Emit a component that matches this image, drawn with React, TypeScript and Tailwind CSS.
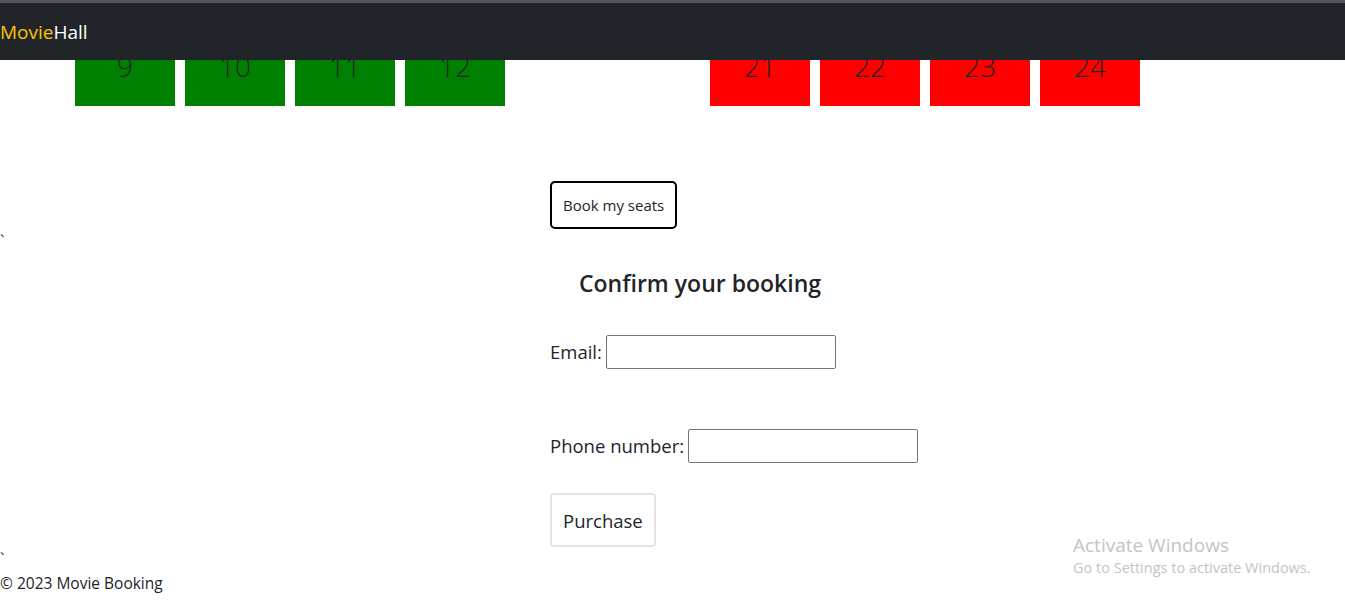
import { FC } from "react";

const leftSeats = [9, 10, 11, 12];
const rightSeats = [21, 22, 23, 24];

const Seat: FC<{ n: number; taken?: boolean }> = ({ n, taken }) => (
  <div
    className={`w-[100px] h-[60px] text-center text-[28px] font-light leading-[40px] text-[#212529] ${
      taken ? "bg-[#ff0000]" : "bg-[#008000]"
    }`}
  >
    {n}
  </div>
);

const App: FC = () => {
  return (
    <div className="relative min-h-[611px] bg-white text-[#212529] font-['Open_Sans','Noto_Sans',sans-serif] text-[16px]">
      <nav className="sticky top-0 z-10 h-[60px] bg-[#212529] border-t-[3px] border-[#4d5761] flex items-center text-[19px] pt-[1px]">
        <span className="text-[#ffc107]">Movie</span>
        <span className="text-white">Hall</span>
      </nav>

      {/* seat map, page is scrolled so the top is under the navbar */}
      <div className="-mt-[14px] flex pl-[75px]">
        <div className="flex gap-[10px]">
          {leftSeats.map((n) => (
            <Seat key={n} n={n} />
          ))}
        </div>
        <div className="flex gap-[10px] ml-[205px]">
          {rightSeats.map((n) => (
            <Seat key={n} n={n} taken />
          ))}
        </div>
      </div>

      <div className="pl-[550px] mt-[75px]">
        <button className="h-[48px] px-[11px] border-2 border-black rounded-[5px] text-[15px] bg-white">
          Book my seats
        </button>
      </div>

      <div className="leading-[24px]">`</div>

      <div className="pl-[550px]">
        <div className="w-[300px] text-center text-[23px] font-semibold leading-[29px] mt-[16px]">
          Confirm your booking
        </div>

        <div className="flex items-center mt-[37px] text-[18.5px]">
          <label>Email:</label>
          <input type="email" className="ml-[4px] w-[230px] h-[34px] border border-[#767676] rounded-[2px]" />
        </div>

        <div className="flex items-center mt-[60px] text-[18.5px]">
          <label>Phone number:</label>
          <input type="tel" className="ml-[4px] w-[230px] h-[34px] border border-[#767676] rounded-[2px]" />
        </div>

        <button className="mt-[30px] h-[54px] px-[11px] pt-[2px] border-2 border-[#e3e3e3] rounded-[4px] text-[18.5px] bg-white">
          Purchase
        </button>
      </div>

      <div className="leading-[24px]">`</div>

      <footer className="leading-[24px] text-[15.5px]">© 2023 Movie Booking</footer>

      <div className="absolute left-[1073px] top-[532px] text-[#c4c4c4]">
        <div className="text-[19px] leading-[26px]">Activate Windows</div>
        <div className="text-[14.5px] leading-[20px]">Go to Settings to activate Windows.</div>
      </div>
    </div>
  );
};

export default App;
